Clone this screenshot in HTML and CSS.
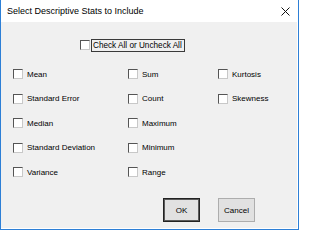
FILE: index.html
```html
<!DOCTYPE html>
<html>
<head>
<meta charset="utf-8">
<link rel="stylesheet" href="styles.css">
</head>
<body>
<div class="window">
  <div class="titlebar">
    <span class="title">Select Descriptive Stats to Include</span>
    <svg class="close" width="9" height="9" viewBox="0 0 9 9"><path d="M0.5 0.5L8.5 8.5M8.5 0.5L0.5 8.5" stroke="#111" stroke-width="1"/></svg>
  </div>
  <div class="client">
    <div class="checkall">
      <span class="box"></span>
      <span class="focus">Check All or Uncheck All</span>
    </div>
    <div class="grid">
      <div class="item"><span class="box"></span><span>Mean</span></div>
      <div class="item"><span class="box"></span><span>Sum</span></div>
      <div class="item"><span class="box"></span><span>Kurtosis</span></div>
      <div class="item"><span class="box"></span><span>Standard Error</span></div>
      <div class="item"><span class="box"></span><span>Count</span></div>
      <div class="item"><span class="box"></span><span>Skewness</span></div>
      <div class="item"><span class="box"></span><span>Median</span></div>
      <div class="item"><span class="box"></span><span>Maximum</span></div>
      <div class="item"></div>
      <div class="item"><span class="box"></span><span>Standard Deviation</span></div>
      <div class="item"><span class="box"></span><span>Minimum</span></div>
      <div class="item"></div>
      <div class="item"><span class="box"></span><span>Variance</span></div>
      <div class="item"><span class="box"></span><span>Range</span></div>
      <div class="item"></div>
    </div>
    <div class="buttons">
      <button class="btn default">OK</button>
      <button class="btn">Cancel</button>
    </div>
  </div>
</div>
</body>
</html>
```
FILE: styles.css
```css
html, body {
  margin: 0;
  padding: 0;
  background: #ffffff;
}
.window {
  width: 299px;
  height: 230px;
  box-sizing: border-box;
  border: 1px solid #2d7fd6;
  border-top: none;
  display: flex;
  flex-direction: column;
  font-family: "Liberation Sans", Arial, sans-serif;
  color: #000;
}
.titlebar {
  height: 22px;
  background: #fff;
  display: flex;
  align-items: center;
  justify-content: space-between;
  padding: 0 8px 0 6px;
  flex: none;
}
.title {
  font-size: 9px;
  color: #000;
}
.close {
  display: block;
  margin-top: 1px;
}
.client {
  flex: 1;
  background: #f0f0f0;
  border-right: 1px solid #fff;
  border-bottom: 1px solid #fff;
  display: flex;
  flex-direction: column;
  font-size: 8px;
}
.box {
  width: 10px;
  height: 10px;
  box-sizing: border-box;
  background: #fff;
  border: 1px solid;
  border-color: #555 #c8c8c8 #c8c8c8 #555;
  flex: none;
}
.checkall {
  margin-top: 16px;
  padding-left: 79px;
  display: flex;
  align-items: center;
  gap: 1px;
  height: 14px;
}
.focus {
  border: 1px solid #3a3a3a;
  height: 13px;
  box-sizing: border-box;
  display: flex;
  align-items: center;
  padding: 0 2px 0 1px;
  font-size: 8.2px;
}
.grid {
  margin-top: 16px;
  padding-left: 12px;
  display: grid;
  grid-template-columns: 115px 90px auto;
  grid-auto-rows: 12px;
  row-gap: 12.5px;
}
.item {
  display: flex;
  align-items: center;
  gap: 4px;
}
.buttons {
  margin-top: 20px;
  display: flex;
  justify-content: flex-end;
  gap: 18px;
  padding-right: 42px;
}
.btn {
  width: 37px;
  height: 24px;
  margin: 0;
  padding: 0;
  background: #e1e1e1;
  border: 1px solid #adadad;
  font-family: "Liberation Sans", Arial, sans-serif;
  font-size: 8px;
  color: #000;
}
.btn.default {
  border: 1px solid #222;
  box-shadow: inset 0 0 0 1px #5a5a5a;
}
```
